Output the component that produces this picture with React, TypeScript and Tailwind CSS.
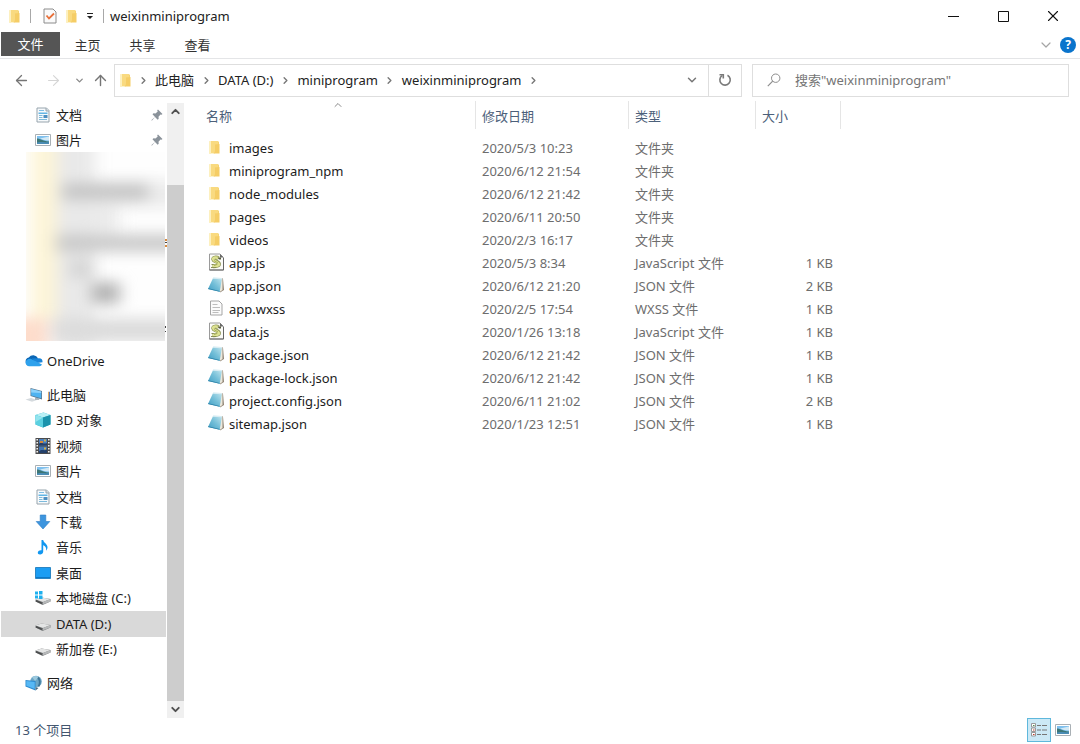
import type { ReactNode } from 'react';
import { ArrowLeft, ArrowRight, ArrowUp, ChevronDown, ChevronRight, ChevronUp, X } from 'lucide-react';

type FileKind = 'folder' | 'js' | 'json' | 'text';

interface FileEntry {
  name: string;
  date: string;
  type: string;
  size: string;
  kind: FileKind;
}

const files: FileEntry[] = [
  { name: 'images', date: '2020/5/3 10:23', type: '文件夹', size: '', kind: 'folder' },
  { name: 'miniprogram_npm', date: '2020/6/12 21:54', type: '文件夹', size: '', kind: 'folder' },
  { name: 'node_modules', date: '2020/6/12 21:42', type: '文件夹', size: '', kind: 'folder' },
  { name: 'pages', date: '2020/6/11 20:50', type: '文件夹', size: '', kind: 'folder' },
  { name: 'videos', date: '2020/2/3 16:17', type: '文件夹', size: '', kind: 'folder' },
  { name: 'app.js', date: '2020/5/3 8:34', type: 'JavaScript 文件', size: '1 KB', kind: 'js' },
  { name: 'app.json', date: '2020/6/12 21:20', type: 'JSON 文件', size: '2 KB', kind: 'json' },
  { name: 'app.wxss', date: '2020/2/5 17:54', type: 'WXSS 文件', size: '1 KB', kind: 'text' },
  { name: 'data.js', date: '2020/1/26 13:18', type: 'JavaScript 文件', size: '1 KB', kind: 'js' },
  { name: 'package.json', date: '2020/6/12 21:42', type: 'JSON 文件', size: '1 KB', kind: 'json' },
  { name: 'package-lock.json', date: '2020/6/12 21:42', type: 'JSON 文件', size: '1 KB', kind: 'json' },
  { name: 'project.config.json', date: '2020/6/11 21:02', type: 'JSON 文件', size: '2 KB', kind: 'json' },
  { name: 'sitemap.json', date: '2020/1/23 12:51', type: 'JSON 文件', size: '1 KB', kind: 'json' },
];

const crumbs = ['此电脑', 'DATA (D:)', 'miniprogram', 'weixinminiprogram'];

function FolderIcon() {
  return (
    <svg width="12" height="15" viewBox="0 0 12 15" className="shrink-0">
      <path d="M1 1.5 6 1v12.5H1z" fill="#fbe7a0" />
      <path d="M6 2h5v9l-5 2.5z" fill="#f3cb62" />
      <path d="M3 1h7.5v12H3z" fill="#f9da80" />
      <path d="M7 4.5 11.5 4v9.5H5.5c1.2-1 1.5-2 1.5-3.500z" fill="#f5cd66" />
      <path d="M1 1.500v12l2 .5V1z" fill="#fdf0bf" />
    </svg>
  );
}

function ScriptIcon() {
  return (
    <svg width="16" height="18" viewBox="0 0 16 18" className="shrink-0">
      <path d="M1.500 1H12l3.500 3.500V17h-14z" fill="#fbfbf8" stroke="#9a9a9a" />
      <path d="M12 1l3.500 3.500H12z" fill="#6a6a6a" />
      <path d="M15.500 5v12h-14" fill="none" stroke="#666" />
      <path d="M10.500 5.200C8.500 4 5 4.200 5.200 6.400c.3 2.200 5.600 2.200 5.800 4.600.1 1.700-2.500 2.400-6.500 2.200" fill="none" stroke="#8a9152" strokeWidth="3.800" />
      <path d="M10.500 5.200C8.500 4 5 4.200 5.200 6.400c.3 2.200 5.600 2.200 5.800 4.600.1 1.700-2.500 2.400-6.500 2.200" fill="none" stroke="#dde292" strokeWidth="2.600" />
      <path d="M9.500 4.500h3.500v2h-2z" fill="#565b3c" />
      <path d="m6 7.500 4 2.500M6 12.500l3-1" stroke="#a7ae5c" />
      <path d="M3.500 11.500h2M3 14.500h5" stroke="#878d55" />
    </svg>
  );
}

function JsonIcon() {
  return (
    <svg width="16" height="16" viewBox="0 0 16 16" className="shrink-0">
      <defs>
        <linearGradient id="note" x1="0" y1="1" x2="1" y2="0">
          <stop offset="0" stopColor="#3f9dc4" />
          <stop offset=".5" stopColor="#74bfd8" />
          <stop offset="1" stopColor="#c3e6ef" />
        </linearGradient>
      </defs>
      <path d="M13.500 1 15 1.800l1 11.200-4 2.500z" fill="#8f8272" />
      <path d="M13.500 1.500 14.500 2v11l-3 2z" fill="#ece8dc" />
      <path d="M5.200.8 14 1l-2.300 13.800L0 12z" fill="url(#note)" />
      <path d="M5.200.8 14 1v1.200L4.700 1.800z" fill="#d9edf3" />
      <path d="m0 12 11.700 2.800.1-.8L.4 11.200z" fill="#2f83a8" />
    </svg>
  );
}

function TextFileIcon() {
  return (
    <svg width="16" height="16" viewBox="0 0 16 16" className="shrink-0">
      <path d="M2.500 1H11l3 3v11H2.500z" fill="#fbfbfb" stroke="#a5a5a5" />
      <path d="M4.500 4.500h5M4.500 7.500h7.500M4.500 10.500h7.500M4.500 12.500h6" stroke="#bdbdbd" />
    </svg>
  );
}

function DocumentIcon() {
  return (
    <svg width="16" height="16" viewBox="0 0 16 16" className="shrink-0">
      <path d="M2 1h9.500L14 3.500V15H2z" fill="#f7fafc" stroke="#97a4ad" />
      <path d="M11 1v3h3" fill="#d9e1e6" stroke="#97a4ad" />
      <path d="M4 3.500h5" stroke="#7fbfe6" />
      <path d="M3.500 5.500h9v1.500h-9z" fill="#62b5e4" />
      <path d="M4 8.500h3.500M4 10.500h3.500M4 12.500h8" stroke="#7cbadc" />
      <path d="M8.500 8h4v3h-4z" fill="#4d8fc0" />
    </svg>
  );
}

function PictureIcon() {
  return (
    <svg width="16" height="16" viewBox="0 0 16 16" className="shrink-0">
      <path d="M.5 2.500h15v11H.5z" fill="#fff" stroke="#a9b0b5" />
      <path d="M2 4h12v8H2z" fill="#7fc0ee" />
      <path d="M5 6.500 14 4.500v4L9 8z" fill="#d3e9f5" />
      <path d="M2 6.500c3 0 5 2.500 12 3V12H2z" fill="#3c7676" />
      <path d="M2 10.500c4-.8 8 0 12-.5v2H2z" fill="#4a8cb5" />
    </svg>
  );
}

function OneDriveIcon() {
  return (
    <svg width="18" height="16" viewBox="0 0 18 16" className="shrink-0">
      <path d="M4.300 12.500a4 4 0 0 1-.5-7.900A5.300 5.300 0 0 1 13 5.300l-3 4z" fill="#0b66b5" />
      <path d="M6.500 5.500 14 5.200a3.700 3.700 0 0 1 3.500 4L12 10z" fill="#1a84d8" />
      <path d="M.6 9.300C1 6.200 4.500 5 6.700 6.200L17 11.500a3 3 0 0 1-2.500 1.800H4.200A3.700 3.700 0 0 1 .6 9.300z" fill="#2ea1ec" />
    </svg>
  );
}

function ComputerIcon() {
  return (
    <svg width="18" height="16" viewBox="0 0 18 16" className="shrink-0">
      <path d="M.5 12.500 6 11l6 2-5 1.800z" fill="#d5dade" />
      <path d="M10 10.500h3l1.500 2.500H10z" fill="#a9b5bd" />
      <path d="m5.500 1 11.500 3v8.500L5.500 9z" fill="#5a7891" />
      <path d="m6.200 2 10 2.600v6.700l-10-2.900z" fill="#4fb3f1" />
      <path d="m6.200 2 10 2.600v1.500l-10-.6z" fill="#8ed2fa" />
    </svg>
  );
}

function CubeIcon() {
  return (
    <svg width="16" height="16" viewBox="0 0 16 16" className="shrink-0">
      <path d="m.5 3 8-2.500L15.500 3v9.500L8 15.500l-7.500-3z" fill="#37b6cc" />
      <path d="m.5 3 8-2.500 7 2.500L8 5.500z" fill="#b9f0f5" />
      <path d="M.5 3 8 5.500v10l-7.500-3z" fill="#5bd0e0" />
      <path d="M8 5.500 15.500 3v9.500L8 15.500z" fill="#1b93ac" />
      <path d="m.5 3 7.500 2.500L.5 10z" fill="#92e4ee" />
    </svg>
  );
}

function VideoIcon() {
  return (
    <svg width="16" height="18" viewBox="0 0 16 18" className="shrink-0">
      <path d="M.5 1h15v16H.5z" fill="#4b4b4d" />
      <path d="M2.200 2v14M13.800 2v14" stroke="#eee" strokeWidth="1.600" strokeDasharray="1.500 1.500" />
      <path d="M4 2h8v6.500H4z" fill="#4a80c0" />
      <path d="M4 9.500h8V16H4z" fill="#4377b5" />
      <path d="M4 7c2-3 5 1 8-1v2.500H4zM4 14.500c3-3 5 0 8-2V16H4z" fill="#24406a" />
      <path d="M5 4h3v2H5z" fill="#d1873c" />
      <path d="M9 2.500h2v2H9zM9 10.500h2v2H9z" fill="#d2b14a" />
    </svg>
  );
}

function DownloadIcon() {
  return (
    <svg width="16" height="16" viewBox="0 0 16 16" className="shrink-0">
      <path d="M5.200 1h5.600v6.500h4L8 15 1.200 7.500h4z" fill="#3d95de" stroke="#2c7cc4" strokeWidth=".6" />
    </svg>
  );
}

function MusicIcon() {
  return (
    <svg width="16" height="16" viewBox="0 0 16 16" className="shrink-0">
      <path d="M6.500 1h1.700c.3 3 4.800 3.800 4.300 8-.2 1.200-.8 2-1.500 2.700.8-3-.9-4.600-2.800-5.400v6.400C8 14.500 6.500 15.600 5 15.500c-1.500 0-2.400-.8-2.200-2 .3-1.600 2-2.500 3.700-2.200z" fill="#1197f0" />
    </svg>
  );
}

function DesktopIcon() {
  return (
    <svg width="16" height="16" viewBox="0 0 16 16" className="shrink-0">
      <path d="M.5 2.500h15v11H.5z" fill="#1b9df3" stroke="#2b86c4" />
      <path d="M1 12.500h14" stroke="#0d78c6" />
    </svg>
  );
}

function DriveIcon({ system = false }: { system?: boolean }) {
  return (
    <svg width="16" height="16" viewBox="0 0 16 16" className="shrink-0">
      <path d="m.5 9.500 6-2 9 1.500v2.500L7.500 15 .5 11.500z" fill="#77797a" />
      <path d="m.5 9.500 6-2 9 1.500-7.500 3z" fill="#e4e5e5" />
      <path d="M8 12 15.500 9v2.500l-8 3z" fill="#b7b9ba" />
      <path d="m1 10.800 6 2.600" stroke="#4a4c4d" strokeWidth="1.500" />
      {system && <path d="M0 1.500h3v3H0zM4 1h3.500v3.500H4zM0 5.500h3v3H0zM4 5.500h3.500V9H4z" fill="#1fb0ee" />}
    </svg>
  );
}

function NetworkIcon() {
  return (
    <svg width="18" height="16" viewBox="0 0 18 16" className="shrink-0">
      <circle cx="11" cy="6.500" r="5.800" fill="#6ba6c6" />
      <path d="M7 2c2-1.500 5-1.500 7 0L10 6z" fill="#9cc9de" />
      <path d="M13 2.500c2 2 2.500 6 .5 9" fill="none" stroke="#3d7496" strokeWidth="1.800" />
      <path d="m.5 5 10 1v9.500L.5 11.500z" fill="#2b89ce" />
      <path d="m1.300 6 8.400.9v7.200l-8.400-3.300z" fill="#56b8f5" />
      <path d="m10.500 15.500 3-2.500-3-1z" fill="#4b6c82" />
    </svg>
  );
}

function PinIcon() {
  return (
    <svg width="12" height="12" viewBox="0 0 12 12" className="shrink-0">
      <path d="m7 .5 4.500 4.500-1 .8-1-.3-2 2.200.2 2-1 1L4 8 1 11.500H.5V11L4 8 1.500 5.300l1-1 2 .2 2.200-2L6.200 1.300z" fill="#8a929a" />
    </svg>
  );
}

function RefreshIcon() {
  return (
    <svg width="14" height="14" viewBox="0 0 14 14" fill="none" stroke="#7a7a7a" strokeWidth="1.600">
      <path d="M9.500 2.300a5.200 5.200 0 1 1-5.400.3" />
      <path d="M1.500 1.800h3.800v3.800" />
    </svg>
  );
}

function SearchIcon() {
  return (
    <svg width="14" height="14" viewBox="0 0 14 14" fill="none" stroke="#8c8c8c" className="shrink-0">
      <circle cx="8.700" cy="5.200" r="4.200" />
      <path d="M5.700 8.200.8 13.200" strokeWidth="1.200" />
    </svg>
  );
}

// Entries of the quick access list are hidden behind a blur
function BlurredEntries() {
  return (
    <svg width="141" height="190" viewBox="0 0 141 190" className="block" aria-hidden="true">
      <defs>
        <filter id="haze" filterUnits="userSpaceOnUse" x="-40" y="-40" width="230" height="280" colorInterpolationFilters="sRGB">
          <feGaussianBlur stdDeviation="8 7" />
        </filter>
        <clipPath id="frame">
          <path d="M0 0h139v189H0z" />
        </clipPath>
      </defs>
      <g clipPath="url(#frame)">
        <path d="M0 0h139v189H0z" fill="#fefefe" />
        <g filter="url(#haze)">
          <path d="M5 -30h26v196H5z" fill="#fdf5d8" />
          <path d="M31 -30h38v245H31z" fill="#e9e9e9" />
          <path d="M69 28h90v28H69z" fill="#ececec" />
          <path d="M36 31h86v17H36z" fill="#c6c6c6" />
          <path d="M69 56h24v24H69z" fill="#ebebeb" />
          <path d="M30 82h130v18H30z" fill="#cbcbcb" />
          <path d="M44 108h24v18H44z" fill="#d4d4d4" />
          <path d="M66 130h28v22H66z" fill="#b4b4b4" />
          <path d="M26 166h134v24H26z" fill="#dcdcdc" />
          <path d="M-20 166h42v44h-42z" fill="#fddccb" />
        </g>
      </g>
      <path d="M139 87h2v2h-2zM139 93h2v2h-2z" fill="#d98b3f" />
      <path d="M139 90h2v1h-2zM139 174h1v2h-1zM139 179h1v1h-1z" fill="#444" />
    </svg>
  );
}

const fileIcons: Record<FileKind, ReactNode> = {
  folder: <FolderIcon />,
  js: <ScriptIcon />,
  json: <JsonIcon />,
  text: <TextFileIcon />,
};

const places: { label: string; icon: ReactNode; active?: boolean }[] = [
  { label: '3D 对象', icon: <CubeIcon /> },
  { label: '视频', icon: <VideoIcon /> },
  { label: '图片', icon: <PictureIcon /> },
  { label: '文档', icon: <DocumentIcon /> },
  { label: '下载', icon: <DownloadIcon /> },
  { label: '音乐', icon: <MusicIcon /> },
  { label: '桌面', icon: <DesktopIcon /> },
  { label: '本地磁盘 (C:)', icon: <DriveIcon system /> },
  { label: 'DATA (D:)', icon: <DriveIcon />, active: true },
  { label: '新加卷 (E:)', icon: <DriveIcon /> },
];

function TreeItem({ icon, label, root, pinned, active }: {
  icon: ReactNode;
  label: string;
  root?: boolean;
  pinned?: boolean;
  active?: boolean;
}) {
  return (
    <button
      className={`flex h-full min-h-6 w-full items-center text-left ${root ? 'gap-1 pl-6' : 'gap-[5px] pl-[34px]'} ${active ? 'bg-[#d9d9d9]' : 'hover:bg-[#e5f3ff]'}`}
    >
      {icon}
      <span className="flex-1 truncate">{label}</span>
      {pinned && <span className="pr-[3px]"><PinIcon /></span>}
    </button>
  );
}

function TitleBar() {
  return (
    <header className="flex h-8 items-center">
      <div className="flex flex-1 items-center pl-2">
        <FolderIcon />
        <span className="ml-2.5 h-3.5 w-px bg-[#a8a8a8]" />
        <button aria-label="属性" className="ml-3">
          <svg width="14" height="16" viewBox="0 0 14 16">
            <path d="M1 1h9l3 3v11H1z" fill="#fafafa" stroke="#8c8c8c" />
            <path d="m3.500 7.500 2.500 3 5-5" fill="none" stroke="#e8703a" strokeWidth="1.800" />
          </svg>
        </button>
        <button aria-label="新建文件夹" className="ml-2"><FolderIcon /></button>
        <button aria-label="自定义快速访问工具栏" className="ml-2 p-px">
          <svg width="8" height="8" viewBox="0 0 8 8">
            <path d="M1 1.500h6" stroke="#222" />
            <path d="M1 4h6L4 7z" fill="#222" />
          </svg>
        </button>
        <span className="mr-1.5 ml-2 h-3.5 w-px bg-[#a8a8a8]" />
        <h1 className="text-[#222]">weixinminiprogram</h1>
      </div>
      <div className="flex h-full pr-0.5">
        <button aria-label="最小化" className="flex w-[50px] items-center justify-center">
          <svg width="11" height="11" viewBox="0 0 11 11"><path d="M0 5.500h11" stroke="#111" /></svg>
        </button>
        <button aria-label="最大化" className="flex w-[50px] items-center justify-center">
          <svg width="11" height="11" viewBox="0 0 11 11"><path d="M.5.5h10v10H.5z" fill="none" stroke="#111" /></svg>
        </button>
        <button aria-label="关闭" className="flex w-[50px] items-center justify-center">
          <X size={18} strokeWidth={1.500} color="#111" />
        </button>
      </div>
    </header>
  );
}

function Ribbon() {
  return (
    <nav className="flex h-[27px] items-start border-b border-[#e4e5e7] pl-px text-[#333]">
      <button className="h-6 w-[59px] bg-[#555] text-white">文件</button>
      <button className="h-[26px] w-[55px]">主页</button>
      <button className="h-[26px] w-[55px]">共享</button>
      <button className="h-[26px] w-[55px]">查看</button>
      <div className="ml-auto flex h-[26px] items-center gap-1.5 pr-1">
        <button aria-label="展开功能区"><ChevronDown size={16} strokeWidth={1.800} color="#a5a5a5" /></button>
        <button aria-label="帮助" className="size-4 rounded-full bg-[#0a74cc] text-xs leading-4 font-bold text-white">?</button>
      </div>
    </nav>
  );
}

function AddressBar() {
  return (
    <div className="flex h-[42px] items-center pr-[11px]">
      <button aria-label="后退" className="flex w-8 justify-center pl-2.5"><ArrowLeft size={17} strokeWidth={1.800} color="#757575" /></button>
      <button aria-label="前进" className="flex w-9 justify-center pl-1.5"><ArrowRight size={17} strokeWidth={1.500} color="#d5d5d5" /></button>
      <button aria-label="最近浏览的位置" className="flex w-[22px] justify-center"><ChevronDown size={11} strokeWidth={3} color="#8a8a8a" /></button>
      <button aria-label="上移" className="flex w-6 justify-start pl-0.5"><ArrowUp size={17} strokeWidth={2} color="#757575" /></button>
      <div className="flex h-[33px] flex-1 items-center border border-[#dedede] pl-1">
        <FolderIcon />
        <ol className="flex flex-1 items-center">
          <li className="flex w-6 justify-center"><ChevronRight size={11} strokeWidth={3} color="#777" /></li>
          {crumbs.map((crumb) => (
            <li key={crumb} className="flex items-center">
              <button className="text-[#222]">{crumb}</button>
              <span className="flex w-6 justify-center"><ChevronRight size={11} strokeWidth={3} color="#777" /></span>
            </li>
          ))}
        </ol>
        <button aria-label="上一个位置" className="flex w-8 justify-center"><ChevronDown size={14} strokeWidth={2.500} color="#777" /></button>
        <button aria-label="刷新" className="flex h-full w-[33px] items-center justify-center border-l border-[#dedede]"><RefreshIcon /></button>
      </div>
      <label className="ml-2.5 flex h-[33px] w-[317px] items-center gap-3.5 border border-[#dedede] pl-3.5">
        <SearchIcon />
        <input
          type="search"
          aria-label="搜索"
          placeholder={'搜索"weixinminiprogram"'}
          className="min-w-0 flex-1 outline-none placeholder:text-[#757575]"
        />
      </label>
    </div>
  );
}

function Sidebar() {
  return (
    <aside className="flex w-[184px] shrink-0">
      <div className="min-w-0 flex-1 pt-px pl-px text-[#1c1c1c]">
        <ul className="grid h-[50px] auto-rows-fr">
          <li><TreeItem icon={<DocumentIcon />} label="文档" pinned /></li>
          <li><TreeItem icon={<PictureIcon />} label="图片" pinned /></li>
        </ul>
        <div className="pl-[25px]"><BlurredEntries /></div>
        <ul className="pt-1.5">
          <li className="h-[25px]"><TreeItem icon={<OneDriveIcon />} label="OneDrive" root /></li>
        </ul>
        <ul className="mt-[9px] grid h-[280px] auto-rows-fr">
          <li><TreeItem icon={<ComputerIcon />} label="此电脑" root /></li>
          {places.map((place) => (
            <li key={place.label}><TreeItem icon={place.icon} label={place.label} active={place.active} /></li>
          ))}
        </ul>
        <ul className="pt-2">
          <li className="h-[25px]"><TreeItem icon={<NetworkIcon />} label="网络" root /></li>
        </ul>
      </div>
      <div className="mt-0.5 ml-px flex w-[17px] flex-col bg-[#f0f0f0]">
        <button aria-label="向上滚动" className="flex h-[17px] items-center justify-center"><ChevronUp size={13} strokeWidth={3.500} color="#505050" /></button>
        <div className="flex-1 pt-[65px]"><div className="h-full bg-[#cdcdcd]" /></div>
        <button aria-label="向下滚动" className="flex h-[17px] items-center justify-center"><ChevronDown size={13} strokeWidth={3.500} color="#505050" /></button>
      </div>
    </aside>
  );
}

function FileTable() {
  return (
    <main className="min-w-0 flex-1">
      <table className="w-full table-fixed text-left">
        <colgroup>
          <col className="w-[292px]" />
          <col className="w-[153px]" />
          <col className="w-[127px]" />
          <col className="w-[85px]" />
          <col />
        </colgroup>
        <thead>
          <tr className="h-[35px] align-top text-[#4c607a]">
            <th className="p-0 font-normal">
              <button className="relative flex h-7 w-full items-center border-r border-[#e5e5e5] pt-0.5 pl-[22px]">
                名称
                <ChevronUp size={12} strokeWidth={2} color="#8a8a8a" className="absolute -top-0.5 left-37" />
              </button>
            </th>
            <th className="p-0 font-normal"><button className="flex h-7 w-full items-center border-r border-[#e5e5e5] pt-0.5 pl-1.5">修改日期</button></th>
            <th className="p-0 font-normal"><button className="flex h-7 w-full items-center border-r border-[#e5e5e5] pt-0.5 pl-1.5">类型</button></th>
            <th className="p-0 font-normal"><button className="flex h-7 w-full items-center border-r border-[#e5e5e5] pt-0.5 pl-1.5">大小</button></th>
            <td />
          </tr>
        </thead>
        <tbody className="text-[#6d6d6d]">
          {files.map((file) => (
            <tr key={file.name} className="h-[23px]">
              <td className="p-0 pl-6">
                <div className="flex h-[23px] items-center gap-[5px] text-[#1c1c1c]">
                  <span className="flex w-4 shrink-0 justify-start pb-px">{fileIcons[file.kind]}</span>
                  <span className="truncate">{file.name}</span>
                </div>
              </td>
              <td className="truncate p-0 pl-1.5">{file.date}</td>
              <td className="truncate p-0 pl-1.5">{file.type}</td>
              <td className="p-0 pr-2 text-right">{file.size}</td>
              <td className="p-0" />
            </tr>
          ))}
        </tbody>
      </table>
    </main>
  );
}

function StatusBar() {
  return (
    <footer className="flex h-[26px] items-center pr-[9px] pb-0.5 pl-[15px] text-[#43566f]">
      <span className="flex-1">13 个项目</span>
      <button aria-label="详细信息" className="flex size-6 items-center justify-center border border-[#5fb8dc] bg-[#cce9f6]">
        <svg width="18" height="16" viewBox="0 0 18 16">
          <path d="M1.500 1.500h4v3.500h-4zM1.500 6h4v3.500h-4zM1.500 10.500h4V14h-4z" fill="#fff" stroke="#999" />
          <path d="M3 3h1.500v1H3z" fill="#4a8f50" />
          <path d="M3 7.500h1.500v1H3zM3 12h1.500v1H3z" fill="#c0392b" />
          <path d="M7 3.500h4M12 3.500h5M7 8h4M12 8h5M7 12.500h4M12 12.500h5" stroke="#777" />
        </svg>
      </button>
      <button aria-label="大缩略图" className="ml-1"><PictureIcon /></button>
    </footer>
  );
}

export default function App() {
  return (
    <div className="flex min-h-screen flex-col bg-white font-['Noto_Sans','Noto_Sans_CJK_SC',sans-serif] text-[13px] leading-5">
      <TitleBar />
      <Ribbon />
      <AddressBar />
      <div className="flex flex-1">
        <Sidebar />
        <FileTable />
      </div>
      <StatusBar />
    </div>
  );
}
